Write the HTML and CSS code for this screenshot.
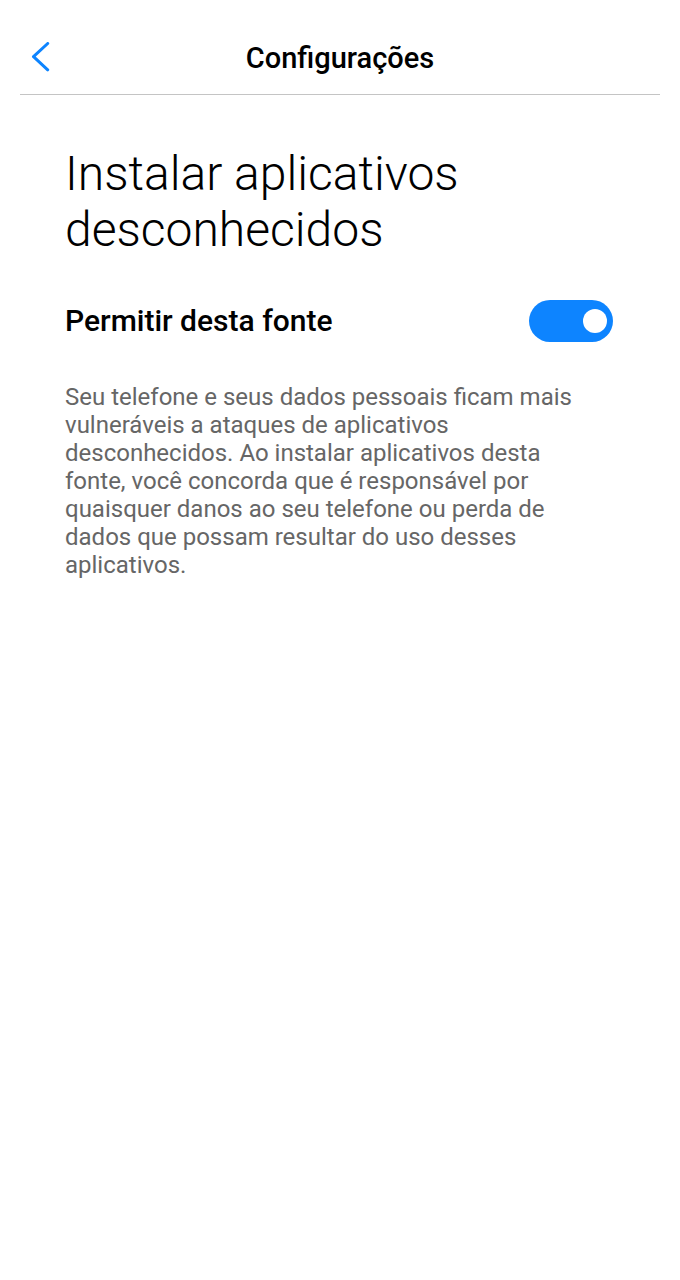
FILE: index.html
```html
<!DOCTYPE html>
<html lang="pt-BR">
<head>
    <meta charset="UTF-8">
    <meta name="viewport" content="width=device-width, initial-scale=1.0">
    <title>Configurações</title>
    <link rel="stylesheet" href="styles.css">
</head>
<body>
    <header class="topbar">
        <button class="back" type="button" aria-label="Voltar">
            <svg width="20" height="32" viewBox="0 0 20 32" fill="none" stroke="currentColor" stroke-width="3" stroke-linecap="round" stroke-linejoin="round">
                <path d="M17.7 1.5 L3.5 14.7 L17.7 27.8"/>
            </svg>
        </button>
        <h1 class="topbar-title">Configurações</h1>
    </header>

    <main class="content">
        <h2 class="title">Instalar aplicativos desconhecidos</h2>

        <div class="option">
            <label class="option-label" for="allow">Permitir desta fonte</label>
            <input class="switch" type="checkbox" role="switch" id="allow" checked>
        </div>

        <p class="note">Seu telefone e seus dados pessoais ficam mais vulneráveis a ataques de aplicativos desconhecidos. Ao instalar aplicativos desta fonte, você concorda que é responsável por quaisquer danos ao seu telefone ou perda de dados que possam resultar do uso desses aplicativos.</p>
    </main>
</body>
</html>
```
FILE: styles.css
```css
* {
    box-sizing: border-box;
}

body {
    margin: 0;
    background: #fff;
    color: #000;
    font-family: Roboto, "Noto Sans", sans-serif;
}

/* barra superior */
.topbar {
    display: grid;
    grid-template-columns: 40px 1fr 40px;
    align-items: center;
    margin: 0 20px;
    padding: 22px 0 0;
    height: 95px;
    border-bottom: 1px solid #c4c4c4;
}

.back {
    display: flex;
    padding: 0 10px;
    border: none;
    background: none;
    color: #0d84ff;
    cursor: pointer;
}

.topbar-title {
    margin: 0;
    font-size: 29px;
    font-weight: 500;
    line-height: 36px;
    text-align: center;
}

.content {
    padding: 51px 67px 0 65px;
}

.title {
    margin: 0;
    font-size: 48px;
    font-weight: 300;
    line-height: 56px;
}

/* linha com o interruptor */
.option {
    display: flex;
    align-items: center;
    justify-content: space-between;
    margin-top: 42px;
}

.option-label {
    font-size: 30px;
    font-weight: 500;
    line-height: 36px;
}

.switch {
    appearance: none;
    flex: none;
    display: flex;
    align-items: center;
    width: 84px;
    height: 42px;
    margin: 0;
    padding: 0 6px;
    border-radius: 21px;
    background: #c4c4c4;
    cursor: pointer;
}

.switch::before {
    content: "";
    width: 24px;
    height: 24px;
    border-radius: 50%;
    background: #fff;
}

.switch:checked {
    justify-content: flex-end;
    background: #0d84ff;
}

.note {
    margin: 41px 0 0;
    padding-right: 24px;
    color: #666;
    font-size: 24px;
    line-height: 28px;
}
```
